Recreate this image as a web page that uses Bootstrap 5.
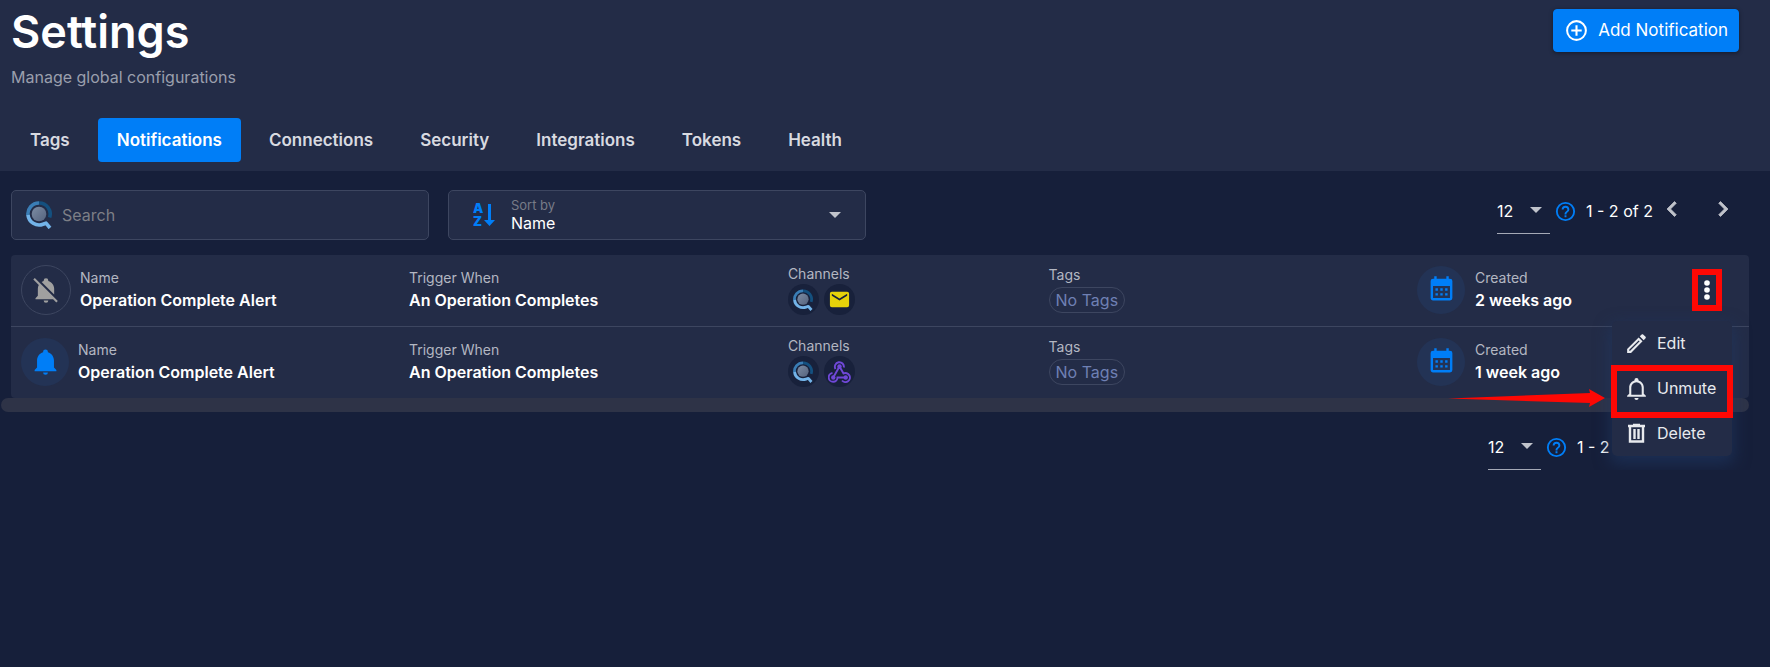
<!DOCTYPE html>
<html lang="en">
<head>
<meta charset="utf-8">
<meta name="viewport" content="width=device-width, initial-scale=1">
<title>Settings – Notifications</title>
<link href="https://cdn.jsdelivr.net/npm/bootstrap@5.3.0/dist/css/bootstrap.min.css" rel="stylesheet">
<style>
:root{--page:#161f3a;--panel:#232c47;--line:#3d4660;--blue:#007ef7;--disc:#233355;--well:#18213b;--red:#fe0804}
body{background:var(--page);color:#fff;font-family:Inter,"Liberation Sans",sans-serif;font-size:16px;line-height:20px}
svg{display:block;flex:none}
.mdi{fill:currentColor}
.page-head{background:var(--panel);padding:4px 31px 9px 11px}
.page-title{font-size:45px;line-height:56px;font-weight:600;margin:0}
.page-sub{color:#9a9fad;line-height:24px;margin:5px 0 29px}
.btn-add{--bs-btn-bg:var(--blue);--bs-btn-border-color:var(--blue);--bs-btn-color:#fff;margin-top:5px;height:43px;padding:0 10px;border-radius:4px;font-size:17px;font-weight:400;gap:9px;box-shadow:0 1px 4px rgba(0,0,0,.4)}
.tabs{gap:9px}
.tabs .nav-link{color:#d8dae0;font-size:17px;font-weight:600;padding:12px 19px;border-radius:4px}
.tabs .nav-link.active{background:var(--blue);color:#fff}
.toolbar{padding:19px 32px 15px 11px;gap:19px}
.field{flex:0 0 24.2%;height:50px;background:var(--panel);border:1px solid var(--line);border-radius:5px}
.field-search{gap:10px;padding:0 16px 0 14px}
.search-input{background:none;border:0;color:#fff;outline:0;width:100%;padding:0}
.search-input::placeholder{color:#7d7f86;opacity:1}
.sort-label{font-size:13px;line-height:16px;color:#777b87}
.plain-select{appearance:none;background:none;border:0;color:#fff;padding:0;outline:0;line-height:20px}
.plain-select option{color:#000}
.caret{width:0;height:0;border:6px solid transparent;border-top-color:#c0c3cb;border-bottom:0;pointer-events:none}
.page-size{width:53px;height:44px;padding-bottom:2px;border-bottom:1px solid #a5a9b6}
.page-size select{width:100%}
.page-size .caret{position:absolute;right:8px;top:17px}
.pager-next{margin-left:21px}
.btn-page{color:#c0c3cb;background:none;border:0;padding:0 0 6px}
.pager-range{margin-left:9px;width:71px;white-space:nowrap}
.pager-range,.pager-help{margin-bottom:2px}
.list{margin:0 21px 0 11px;background:var(--panel);border-radius:4px}
.notice{display:grid;grid-template-columns:22.9% 21.8% 15% 21.2% 1fr;align-items:center;height:71px;padding-bottom:2px}
.notice + .notice{border-top:1px solid var(--line);height:72px}
.disc{width:48px;height:48px;border-radius:50%;background:var(--disc);color:var(--blue);flex:none}
.disc-off{width:50px;height:50px;background:none;border:1px solid var(--line);color:#a0a0a0}
.who{gap:9px;padding-left:10px}
.made{gap:10px}
.lbl{font-size:14px;line-height:20px;color:#b3b7c2}
.val{font-weight:600;line-height:24px}
.channels{gap:5px}
.channel{width:31px;height:31px;border-radius:50%;background:var(--well)}
.pill{width:max-content;margin-top:2px;border:1px solid var(--line);border-radius:13px;height:26px;line-height:24px;padding:0 6px;color:#6f80b4}
.tagcol{padding-bottom:2px}
.btn-more{width:30px;height:42px;border:6px solid var(--red);background:none;color:#fff;padding:0}
.more{margin-right:27px}
.more-menu{position:absolute;right:-10px;top:52px;z-index:5;width:120px;background:var(--panel);border-radius:5px;box-shadow:0 6px 16px 2px rgba(32,56,100,.6)}
.more-menu button{display:flex;align-items:center;gap:8px;width:100%;height:45px;padding:0 0 0 12px;border:0;background:none;color:#e8eaee;text-align:left}
.marked{position:relative}
.marked::after{content:"";position:absolute;inset:-1px -1px -7px -1px;border:6px solid var(--red)}
.arrow{position:absolute;right:127px;top:23px}
.scroll-track{height:14px;margin:0 21px 0 1px;border-radius:7px;background:#2e3347}
.pager-foot{padding:14px 41px 0 0}
</style>
</head>
<body>
<svg width="0" height="0" class="position-absolute" aria-hidden="true">
  <defs>
    <linearGradient id="lens" x1="0" y1="0" x2="1" y2="1"><stop offset="0" stop-color="#7d8ca3"/><stop offset="1" stop-color="#55637e"/></linearGradient>
    <symbol id="i-logo" viewBox="0 0 26 28">
      <circle cx="13" cy="13" r="7.3" fill="url(#lens)"/>
      <g fill="none" stroke-width="3.6">
        <path d="M13 2A11 11 0 0 1 23.600 16.500" stroke="#14507f"/>
        <path d="M2 14.500A11 11 0 0 1 13 2" stroke="#3a7db5"/>
        <path d="M2 14A11.200 11.200 0 0 0 17 23.300L20 22.200L24 27" stroke="#73b3e8" stroke-linejoin="round"/>
      </g>
    </symbol>
    <symbol id="i-help" viewBox="0 0 24 24"><path d="M11,18H13V16H11V18M12,2A10,10 0 0,0 2,12A10,10 0 0,0 12,22A10,10 0 0,0 22,12A10,10 0 0,0 12,2M12,20C7.590,20 4,16.410 4,12C4,7.590 7.590,4 12,4C16.410,4 20,7.590 20,12C20,16.410 16.410,20 12,20M12,6A4,4 0 0,0 8,10H10A2,2 0 0,1 12,8A2,2 0 0,1 14,10C14,12 11,11.750 11,15H13C13,12.750 16,12.500 16,10A4,4 0 0,0 12,6Z"/></symbol>
    <symbol id="i-left" viewBox="0 0 24 24"><path stroke="currentColor" stroke-width=".6" d="M15.410,16.580L10.830,12L15.410,7.410L14,6L8,12L14,18L15.410,16.580Z"/></symbol>
    <symbol id="i-right" viewBox="0 0 24 24"><path stroke="currentColor" stroke-width=".6" d="M8.590,16.580L13.170,12L8.590,7.410L10,6L16,12L10,18L8.590,16.580Z"/></symbol>
    <symbol id="i-cal" viewBox="0 0 24 24"><path d="M9,11V13H7V11H9M13,11V13H11V11H13M17,11V13H15V11H17M19,3A2,2 0 0,1 21,5V19A2,2 0 0,1 19,21H5C3.890,21 3,20.100 3,19V5A2,2 0 0,1 5,3H6V1H8V3H16V1H18V3H19M19,19V9H5V19H19M9,15V17H7V15H9M13,15V17H11V15H13M17,15V17H15V15H17Z"/></symbol>
  </defs>
</svg>

<header class="page-head">
  <div class="d-flex justify-content-between align-items-start">
    <div>
      <h1 class="page-title">Settings</h1>
      <p class="page-sub">Manage global configurations</p>
    </div>
    <button type="button" class="btn btn-add d-flex align-items-center">
      <svg class="mdi" width="25" height="25" viewBox="0 0 24 24"><path d="M12,20C7.590,20 4,16.410 4,12C4,7.590 7.590,4 12,4C16.410,4 20,7.590 20,12C20,16.410 16.410,20 12,20M12,2A10,10 0 0,0 2,12A10,10 0 0,0 12,22A10,10 0 0,0 22,12A10,10 0 0,0 12,2M13,7H11V11H7V13H11V17H13V13H17V11H13V7Z"/></svg>
      Add Notification
    </button>
  </div>
  <nav class="nav tabs">
    <a class="nav-link" href="#">Tags</a>
    <a class="nav-link active" aria-current="page" href="#">Notifications</a>
    <a class="nav-link" href="#">Connections</a>
    <a class="nav-link" href="#">Security</a>
    <a class="nav-link" href="#">Integrations</a>
    <a class="nav-link" href="#">Tokens</a>
    <a class="nav-link" href="#">Health</a>
  </nav>
</header>

<main>
  <div class="toolbar d-flex align-items-start">
    <div class="field field-search d-flex align-items-center">
      <svg width="26" height="28"><use href="#i-logo"/></svg>
      <input class="search-input" type="search" placeholder="Search" aria-label="Search">
    </div>
    <div class="field d-flex align-items-center ps-4 pe-4">
      <svg class="mdi" width="22" height="26" viewBox="0 0 22 26" color="#007ef7"><text x="0" y="11" font-size="13" font-weight="900">A</text><text x="0" y="24" font-size="13" font-weight="900">Z</text><path d="M15 2h3v16h4l-5.500 6-5.500-6h4z"/></svg>
      <div class="flex-grow-1 d-flex flex-column ms-3">
        <label class="sort-label" for="sort">Sort by</label>
        <select class="plain-select" id="sort"><option>Name</option><option>Created</option></select>
      </div>
      <span class="caret"></span>
    </div>
    <div class="pager d-flex align-items-center ms-auto">
      <div class="page-size d-flex align-items-center position-relative me-1">
        <select class="plain-select" aria-label="Rows per page"><option>12</option><option>24</option></select>
        <span class="caret"></span>
      </div>
      <svg class="mdi pager-help" width="23" height="23" color="#007ef7"><use href="#i-help"/></svg>
      <span class="pager-range">1 - 2 of 2</span>
      <button class="btn-page" type="button" aria-label="Previous page"><svg class="mdi" width="30" height="30"><use href="#i-left"/></svg></button>
      <button class="btn-page pager-next" type="button" aria-label="Next page"><svg class="mdi" width="30" height="30"><use href="#i-right"/></svg></button>
    </div>
  </div>

  <ul class="list list-unstyled">
    <li class="notice">
      <div class="who d-flex align-items-center">
        <span class="disc disc-off d-flex align-items-center justify-content-center"><svg class="mdi" width="28" height="28" viewBox="0 0 24 24"><path d="M20.840,22.730L18.110,20H3V19L5,17V11C5,9.860 5.290,8.730 5.830,7.720L1.110,3L2.390,1.730L22.110,21.460L20.840,22.730M19,15.800V11C19,7.900 16.970,5.170 14,4.290C14,4.190 14,4.100 14,4A2,2 0 0,0 12,2A2,2 0 0,0 10,4C10,4.100 10,4.190 10,4.290C9.390,4.470 8.800,4.740 8.260,5.090L19,15.800M12,23A2,2 0 0,0 14,21H10A2,2 0 0,0 12,23Z"/></svg></span>
        <div><div class="lbl">Name</div><div class="val">Operation Complete Alert</div></div>
      </div>
      <div><div class="lbl">Trigger When</div><div class="val">An Operation Completes</div></div>
      <div>
        <div class="lbl">Channels</div>
        <div class="channels d-flex">
          <span class="channel d-flex align-items-center justify-content-center"><svg width="20" height="22"><use href="#i-logo"/></svg></span>
          <span class="channel d-flex align-items-center justify-content-center"><svg width="23" height="23" viewBox="0 0 24 24" fill="#e6d20a"><path d="M20,8L12,13L4,8V6L12,11L20,6M20,4H4C2.890,4 2,4.890 2,6V18A2,2 0 0,0 4,20H20A2,2 0 0,0 22,18V6C22,4.890 21.100,4 20,4Z"/></svg></span>
        </div>
      </div>
      <div class="tagcol"><div class="lbl">Tags</div><div class="pill">No Tags</div></div>
      <div class="made d-flex align-items-center">
        <span class="disc d-flex align-items-center justify-content-center"><svg class="mdi" width="29" height="29"><use href="#i-cal"/></svg></span>
        <div><div class="lbl">Created</div><div class="val">2 weeks ago</div></div>
        <div class="more position-relative ms-auto">
          <button class="btn-more d-flex align-items-center justify-content-center" type="button" aria-label="More actions" aria-expanded="true"><svg class="mdi" width="6" height="20" viewBox="0 0 6 20"><circle cx="3" cy="3" r="2.800"/><circle cx="3" cy="10" r="2.800"/><circle cx="3" cy="17" r="2.800"/></svg></button>
          <div class="more-menu">
            <button type="button"><svg class="mdi" width="25" height="25" viewBox="0 0 24 24"><path d="M14.060,9L15,9.940L5.920,19H5V18.080L14.060,9M17.660,3C17.410,3 17.150,3.100 16.960,3.290L15.130,5.120L18.880,8.870L20.710,7.040C21.100,6.650 21.100,6 20.710,5.630L18.370,3.290C18.170,3.090 17.920,3 17.660,3M14.060,6.190L3,17.250V21H6.750L17.810,9.940L14.060,6.190Z"/></svg>Edit</button>
            <button type="button" class="marked"><svg class="mdi" width="25" height="25" viewBox="0 0 24 24"><path d="M10,21H14A2,2 0 0,1 12,23A2,2 0 0,1 10,21M21,19V20H3V19L5,17V11C5,7.900 7.030,5.170 10,4.290C10,4.190 10,4.100 10,4A2,2 0 0,1 12,2A2,2 0 0,1 14,4C14,4.100 14,4.190 14,4.290C16.970,5.170 19,7.900 19,11V17L21,19M17,11A5,5 0 0,0 12,6A5,5 0 0,0 7,11V18H17V11Z"/></svg>Unmute<svg class="arrow" width="157" height="18" viewBox="0 0 157 18"><path d="M0 9.500L142 4L141 0L157 9L141 18L142 14Z" fill="#fe0804"/></svg></button>
            <button type="button"><svg width="25" height="25" viewBox="0 0 25 25" fill="none" stroke="currentColor" stroke-width="2.400"><path d="M4 5H21M9 4H16M6 6V20.500H19V6M10.500 8V18M14.500 8V18"/></svg>Delete</button>
          </div>
        </div>
      </div>
    </li>
    <li class="notice">
      <div class="who d-flex align-items-center">
        <span class="disc d-flex align-items-center justify-content-center"><svg class="mdi" width="29" height="29" viewBox="0 0 24 24"><path d="M21,19V20H3V19L5,17V11C5,7.900 7.030,5.170 10,4.290C10,4.190 10,4.100 10,4A2,2 0 0,1 12,2A2,2 0 0,1 14,4C14,4.100 14,4.190 14,4.290C16.970,5.170 19,7.900 19,11V17L21,19M14,21A2,2 0 0,1 12,23A2,2 0 0,1 10,21"/></svg></span>
        <div><div class="lbl">Name</div><div class="val">Operation Complete Alert</div></div>
      </div>
      <div><div class="lbl">Trigger When</div><div class="val">An Operation Completes</div></div>
      <div>
        <div class="lbl">Channels</div>
        <div class="channels d-flex">
          <span class="channel d-flex align-items-center justify-content-center"><svg width="20" height="22"><use href="#i-logo"/></svg></span>
          <span class="channel d-flex align-items-center justify-content-center"><svg width="23" height="22" viewBox="0 0 23 22" fill="none" stroke="#7048d8" stroke-width="1.900"><path d="M7.500 8A4.500 4.500 0 1 1 15.800 6.500M11.500 5.500L5.500 16M11.500 5.500L15.500 12.500A4.500 4.500 0 1 1 14 19.500M4.500 12A4.400 4.400 0 1 0 9.500 16.500H17.500"/><g fill="#7048d8" stroke="none"><circle cx="11.500" cy="5.500" r="2.200"/><circle cx="5.300" cy="16.500" r="2.200"/><circle cx="17.700" cy="16.500" r="2.200"/></g></svg></span>
        </div>
      </div>
      <div class="tagcol"><div class="lbl">Tags</div><div class="pill">No Tags</div></div>
      <div class="made d-flex align-items-center">
        <span class="disc d-flex align-items-center justify-content-center"><svg class="mdi" width="29" height="29"><use href="#i-cal"/></svg></span>
        <div><div class="lbl">Created</div><div class="val">1 week ago</div></div>
      </div>
    </li>
  </ul>
  <div class="scroll-track"></div>

  <div class="pager-foot d-flex align-items-center justify-content-end">
      <div class="page-size d-flex align-items-center position-relative me-1">
        <select class="plain-select" aria-label="Rows per page, bottom"><option>12</option><option>24</option></select>
        <span class="caret"></span>
      </div>
      <svg class="mdi pager-help" width="23" height="23" color="#007ef7"><use href="#i-help"/></svg>
      <span class="pager-range">1 - 2 of 2</span>
      <button class="btn-page" type="button" aria-label="Previous page"><svg class="mdi" width="30" height="30"><use href="#i-left"/></svg></button>
      <button class="btn-page pager-next" type="button" aria-label="Next page"><svg class="mdi" width="30" height="30"><use href="#i-right"/></svg></button>
  </div>
</main>
<script src="https://cdn.jsdelivr.net/npm/bootstrap@5.3.0/dist/js/bootstrap.bundle.min.js"></script>
</body>
</html>
